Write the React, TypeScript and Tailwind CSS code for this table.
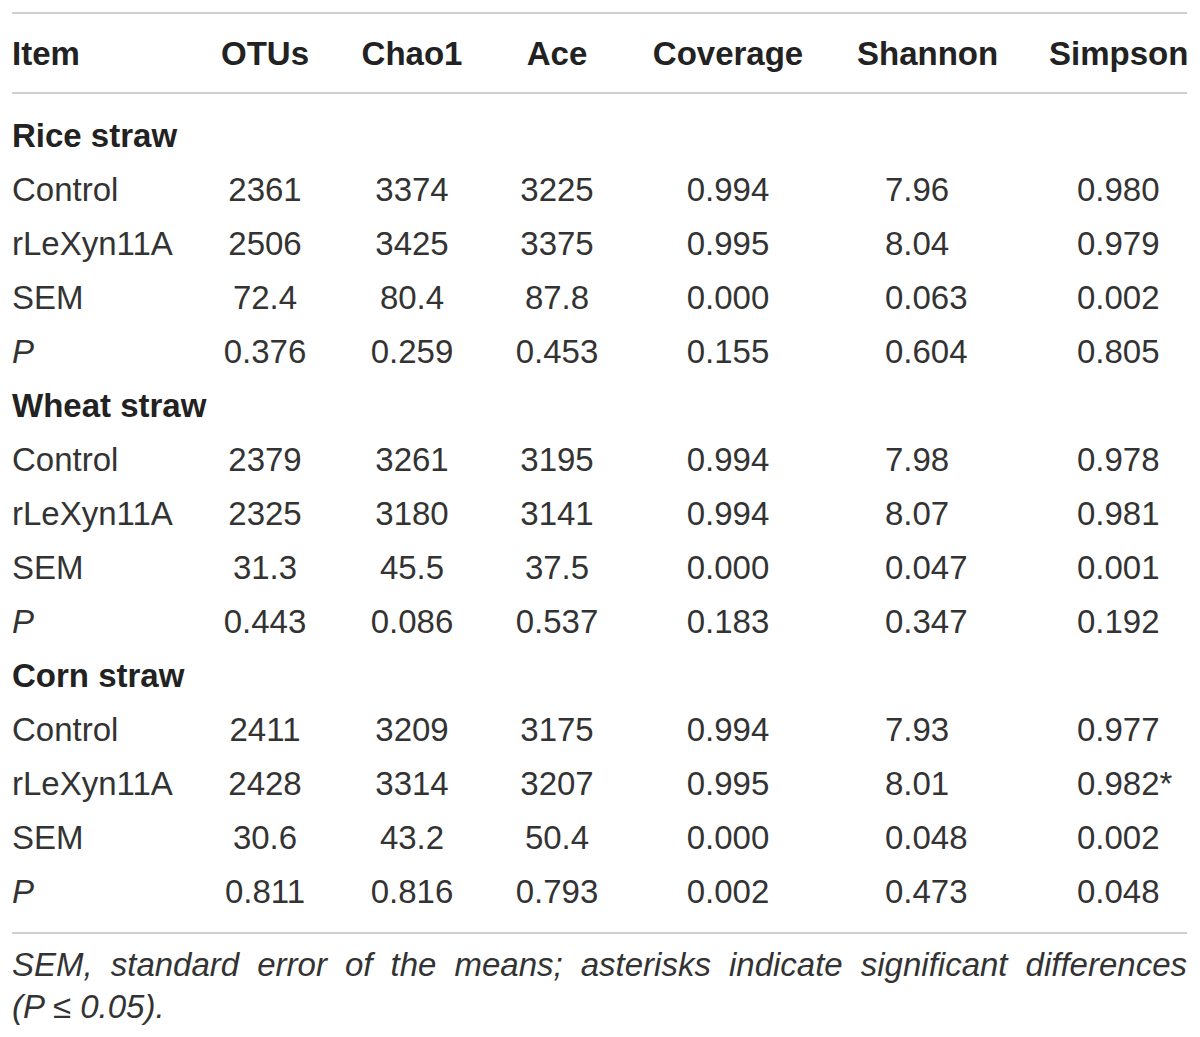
import React from 'react';

// --- TABLE DATA ---
type Row = { label: string; italic?: boolean; values: string[] };
type Group = { title: string; rows: Row[] };

const groups: Group[] = [
  {
    title: 'Rice straw',
    rows: [
      { label: 'Control', values: ['2361', '3374', '3225', '0.994', '7.96', '0.980'] },
      { label: 'rLeXyn11A', values: ['2506', '3425', '3375', '0.995', '8.04', '0.979'] },
      { label: 'SEM', values: ['72.4', '80.4', '87.8', '0.000', '0.063', '0.002'] },
      { label: 'P', italic: true, values: ['0.376', '0.259', '0.453', '0.155', '0.604', '0.805'] },
    ],
  },
  {
    title: 'Wheat straw',
    rows: [
      { label: 'Control', values: ['2379', '3261', '3195', '0.994', '7.98', '0.978'] },
      { label: 'rLeXyn11A', values: ['2325', '3180', '3141', '0.994', '8.07', '0.981'] },
      { label: 'SEM', values: ['31.3', '45.5', '37.5', '0.000', '0.047', '0.001'] },
      { label: 'P', italic: true, values: ['0.443', '0.086', '0.537', '0.183', '0.347', '0.192'] },
    ],
  },
  {
    title: 'Corn straw',
    rows: [
      { label: 'Control', values: ['2411', '3209', '3175', '0.994', '7.93', '0.977'] },
      { label: 'rLeXyn11A', values: ['2428', '3314', '3207', '0.995', '8.01', '0.982*'] },
      { label: 'SEM', values: ['30.6', '43.2', '50.4', '0.000', '0.048', '0.002'] },
      { label: 'P', italic: true, values: ['0.811', '0.816', '0.793', '0.002', '0.473', '0.048'] },
    ],
  },
];

const headers = ['OTUs', 'Chao1', 'Ace', 'Coverage', 'Shannon', 'Simpson'];

// column alignment: first four centered, last two left with offsets
const headerCls = [
  'text-center',
  'text-center',
  'text-center',
  'text-center',
  'text-left pl-[31px]',
  'text-left',
];
const valueCls = [
  'text-center',
  'text-center',
  'text-center',
  'text-center',
  'text-left pl-[59px]',
  'text-left pl-[28px]',
];

const gridCols = 'grid grid-cols-[178px_150px_144px_146px_196px_223px_138px] items-center';

const App: React.FC = () => {
  return (
    <div
      className="w-[1200px] min-h-[1037px] bg-white px-[12px] pt-[12px] text-[33px] text-[#333] leading-none"
      style={{ fontFamily: '"Liberation Sans", Arial, sans-serif' }}
    >
      <div className="w-[1175px] border-t-2 border-[#cfcfcf]">
        {/* header */}
        <div className={`${gridCols} h-[80px] border-b-2 border-[#cfcfcf] font-bold text-[#222]`}>
          <div>Item</div>
          {headers.map((h, i) => (
            <div key={h} className={headerCls[i]}>{h}</div>
          ))}
        </div>

        {/* body */}
        <div className="py-[14px]">
          {groups.map(g => (
            <React.Fragment key={g.title}>
              <div className="h-[54px] flex items-center font-bold text-[#222]">{g.title}</div>
              {g.rows.map(r => (
                <div key={g.title + r.label} className={`${gridCols} h-[54px]`}>
                  <div className={r.italic ? 'italic' : ''}>{r.label}</div>
                  {r.values.map((v, i) => (
                    <div key={i} className={valueCls[i]}>{v}</div>
                  ))}
                </div>
              ))}
            </React.Fragment>
          ))}
        </div>

        {/* footnote */}
        <div className="border-t-2 border-[#cfcfcf] pt-[10px] italic text-justify leading-[42px] text-[#333]">
          SEM, standard error of the means; asterisks indicate significant differences{' '}
          <span className="whitespace-nowrap">(P ≤ 0.05).</span>
        </div>
      </div>
    </div>
  );
};

export default App;
